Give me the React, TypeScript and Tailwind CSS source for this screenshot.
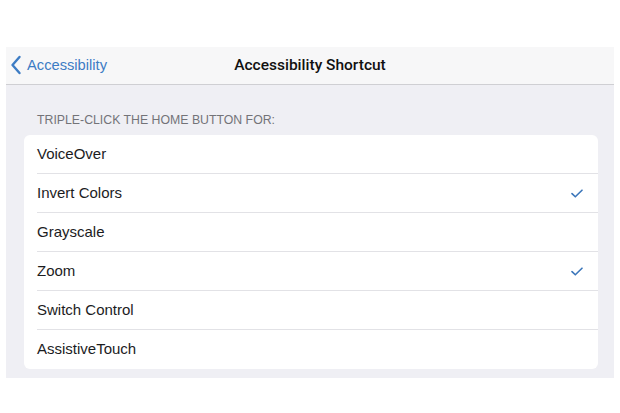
const options = [
  { label: 'VoiceOver', checked: false },
  { label: 'Invert Colors', checked: true },
  { label: 'Grayscale', checked: false },
  { label: 'Zoom', checked: true },
  { label: 'Switch Control', checked: false },
  { label: 'AssistiveTouch', checked: false },
];

const Check = () => (
  <svg width="12" height="9" viewBox="0 0 12 9" fill="none">
    <path d="M1 4.6 L4.3 7.8 L11 1.2" stroke="#3b76ba" strokeWidth="1.6" strokeLinecap="round" strokeLinejoin="round" />
  </svg>
);

const App = () => {
  return (
    <div
      className="w-[620px] h-[413px] bg-white pt-[47px] px-[6px]"
      style={{ fontFamily: '"Liberation Sans", Arial, sans-serif' }}
    >
      <div className="h-[331px] bg-[#efeff4] flex flex-col">
        <div className="h-[38px] bg-[#f7f7f8] border-b border-[#cfcfd3] grid grid-cols-[1fr_auto_1fr] items-center">
          <div className="flex items-center pl-[4px] text-[#3d7cc4]">
            <svg width="12" height="20" viewBox="0 0 12 20" fill="none">
              <path d="M9.5 2 L2.5 10 L9.5 18" stroke="#3d7cc4" strokeWidth="2.4" strokeLinecap="round" strokeLinejoin="round" />
            </svg>
            <span className="ml-[5px] text-[14.7px]">Accessibility</span>
          </div>
          <div className="font-['Roboto',sans-serif] font-medium text-[15.5px] text-[#111]">Accessibility Shortcut</div>
          <div />
        </div>

        <div className="pl-[31px] pt-[28px] pb-[8px] text-[12.3px] text-[#737378] leading-[14px]">
          TRIPLE-CLICK THE HOME BUTTON FOR:
        </div>

        <div className="ml-[18px] mr-[16px] bg-white rounded-[6px] overflow-hidden">
          {options.map((opt, i) => (
            <div key={opt.label} className="pl-[13px]">
              <div
                className={`h-[39px] flex items-center justify-between pr-[15px] ${
                  i < options.length - 1 ? 'border-b border-[#e2e2e6]' : ''
                }`}
              >
                <span className="text-[15px] text-[#1c1c1e]">{opt.label}</span>
                {opt.checked && <Check />}
              </div>
            </div>
          ))}
        </div>
      </div>
    </div>
  );
};

export default App;
